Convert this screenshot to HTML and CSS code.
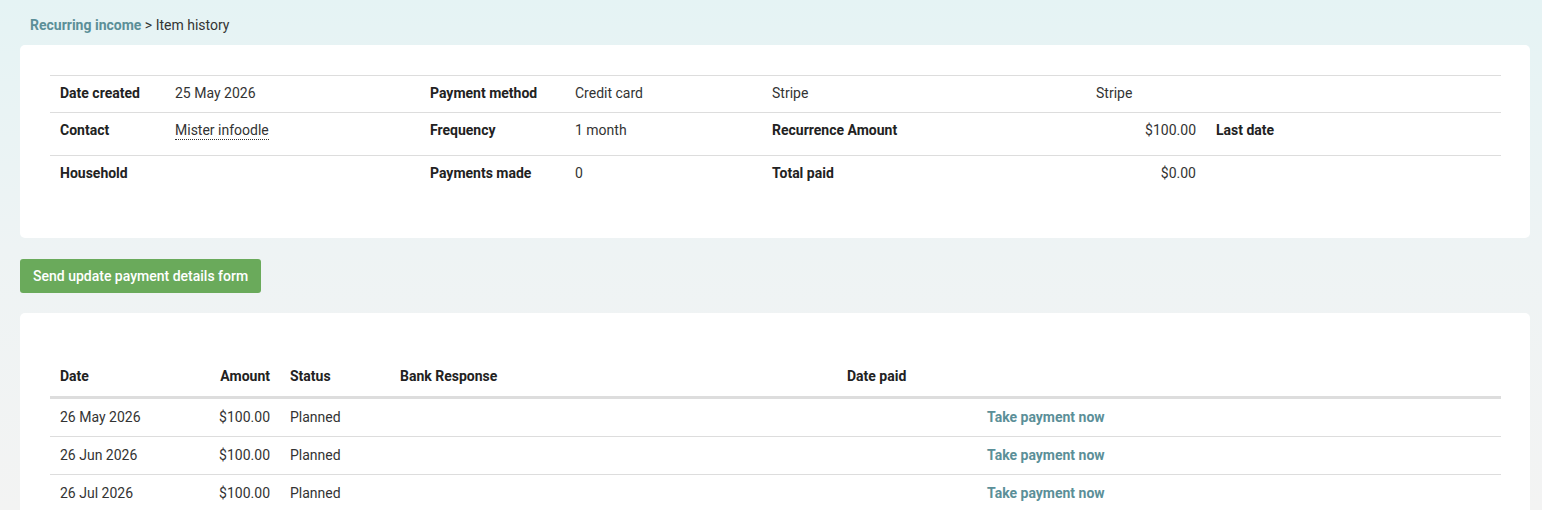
FILE: index.html
```html
<!DOCTYPE html>
<html>
<head>
<meta charset="utf-8">
<link rel="stylesheet" href="styles.css">
</head>
<body>
<div class="page">
  <div class="breadcrumb"><a class="crumb-link" href="#">Recurring income</a> &gt; Item history</div>

  <div class="card card-info">
    <table class="info">
      <colgroup>
        <col class="c1"><col class="c2"><col class="c3"><col class="c4"><col class="c5"><col class="c6"><col class="c7"><col>
      </colgroup>
      <tr>
        <th>Date created</th><td>25 May 2026</td>
        <th>Payment method</th><td>Credit card</td>
        <td>Stripe</td><td>Stripe</td><td></td><td></td>
      </tr>
      <tr class="tall">
        <th>Contact</th><td><span class="contact">Mister infoodle</span></td>
        <th>Frequency</th><td>1 month</td>
        <th>Recurrence Amount</th><td class="num">$100.00</td><th>Last date</th><td></td>
      </tr>
      <tr class="last">
        <th>Household</th><td></td>
        <th>Payments made</th><td>0</td>
        <th>Total paid</th><td class="num">$0.00</td><td></td><td></td>
      </tr>
    </table>
  </div>

  <div class="actions">
    <button class="btn-green">Send update payment details form</button>
  </div>

  <div class="card card-history">
    <table class="history">
      <colgroup>
        <col class="h1"><col class="h2"><col class="h3"><col class="h4"><col class="h5"><col>
      </colgroup>
      <thead>
        <tr><th>Date</th><th class="num">Amount</th><th>Status</th><th>Bank Response</th><th>Date paid</th><th></th></tr>
      </thead>
      <tbody>
        <tr><td>26 May 2026</td><td class="num">$100.00</td><td>Planned</td><td></td><td></td><td><a class="take" href="#">Take payment now</a></td></tr>
        <tr><td>26 Jun 2026</td><td class="num">$100.00</td><td>Planned</td><td></td><td></td><td><a class="take" href="#">Take payment now</a></td></tr>
        <tr><td>26 Jul 2026</td><td class="num">$100.00</td><td>Planned</td><td></td><td></td><td><a class="take" href="#">Take payment now</a></td></tr>
      </tbody>
    </table>
  </div>
</div>
</body>
</html>
```

FILE: styles.css
```css
html, body {
  margin: 0;
  padding: 0;
}
body {
  font-family: Roboto, "Liberation Sans", Arial, sans-serif;
  font-size: 14px;
  color: #333;
  background: linear-gradient(to bottom, #e5f3f4 0px, #eef3f4 250px, #f3f3f3 510px);
  min-height: 510px;
  overflow: hidden;
}
.page {
  padding: 15px 12px 0 20px;
  height: 495px;
  overflow: hidden;
}
.breadcrumb {
  padding-left: 10px;
  line-height: 20px;
  height: 20px;
  margin-bottom: 10px;
  color: #333;
}
.crumb-link {
  color: #5b8f98;
  font-weight: 700;
  text-decoration: none;
}
.card {
  background: #fff;
  border-radius: 5px;
}
.card-info {
  padding: 30px 29px 30px 30px;
  height: 133px;
}
table {
  border-collapse: collapse;
  width: 100%;
  table-layout: fixed;
}
.info th, .info td {
  text-align: left;
  padding: 8px 10px 10px;
  line-height: 18px;
  vertical-align: top;
  border-top: 1px solid #ddd;
  color: #333;
  font-weight: 400;
}
.info th {
  font-weight: 700;
  color: #222;
}
.info .c1 { width: 115px; }
.info .c2 { width: 255px; }
.info .c3 { width: 145px; }
.info .c4 { width: 197px; }
.info .c5 { width: 324px; }
.info .c6 { width: 120px; }
.info .c7 { width: 120px; }
.info td.num { text-align: right; }
.info tr.tall th, .info tr.tall td {
  padding-bottom: 16px;
}
.contact {
  border-bottom: 1px dotted #333;
  padding-bottom: 1px;
}
.actions {
  padding: 21px 0 20px;
}
.btn-green {
  display: block;
  font-family: Roboto, "Liberation Sans", Arial, sans-serif;
  font-size: 14px;
  font-weight: 500;
  color: #fff;
  background: #6aaa5b;
  border: none;
  border-radius: 3px;
  height: 34px;
  padding: 0 13px;
  cursor: pointer;
}
.card-history {
  padding: 44px 29px 0 30px;
  height: 200px;
  border-radius: 5px 5px 0 0;
}
.history th, .history td {
  text-align: left;
  padding: 9px 10px 10px;
  line-height: 18px;
  color: #333;
  font-weight: 400;
}
.history thead th {
  padding: 10px 10px 11px;
  font-weight: 700;
  color: #222;
  border-bottom: 3px solid #ddd;
}
.history tbody tr + tr td {
  border-top: 1px solid #ddd;
}
.history .num { text-align: right; }
.history .h1 { width: 120px; }
.history .h2 { width: 110px; }
.history .h3 { width: 110px; }
.history .h4 { width: 447px; }
.history .h5 { width: 140px; }
.take {
  color: #5b8f98;
  font-weight: 700;
  text-decoration: none;
}
```
